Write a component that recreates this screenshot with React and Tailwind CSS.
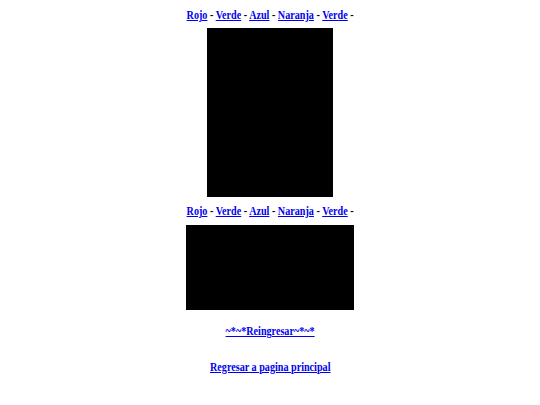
export default function App() {
  const Nav = () => (
    <div className="scale-x-[0.78] whitespace-nowrap text-[13px] font-bold leading-[15px] text-black">
      {["Rojo", "Verde", "Azul", "Naranja", "Verde"].map((c, i) => (
        <span key={i}>
          <a href="#" className="text-[#0000ee] underline">{c}</a> -{" "}
        </span>
      ))}
    </div>
  );
  return (
    <div className="flex w-[540px] h-[405px] flex-col items-center bg-white pt-[7px] text-center" style={{ fontFamily: '"Liberation Serif", serif' }}>
      <Nav />
      <div className="mt-[6px] h-[169px] w-[126px] bg-black" />
      <div className="mt-[6px]"><Nav /></div>
      <div className="mt-[7px] h-[85px] w-[168px] bg-black" />
      <a href="#" className="mt-[13px] scale-x-[0.78] whitespace-nowrap text-[13px] font-bold leading-[15px] text-[#0000ee] underline">~*~*Reingresar~*~*</a>
      <a href="#" className="mt-[21px] scale-x-[0.78] whitespace-nowrap text-[13px] font-bold leading-[15px] text-[#0000ee] underline">Regresar a pagina principal</a>
    </div>
  );
}
